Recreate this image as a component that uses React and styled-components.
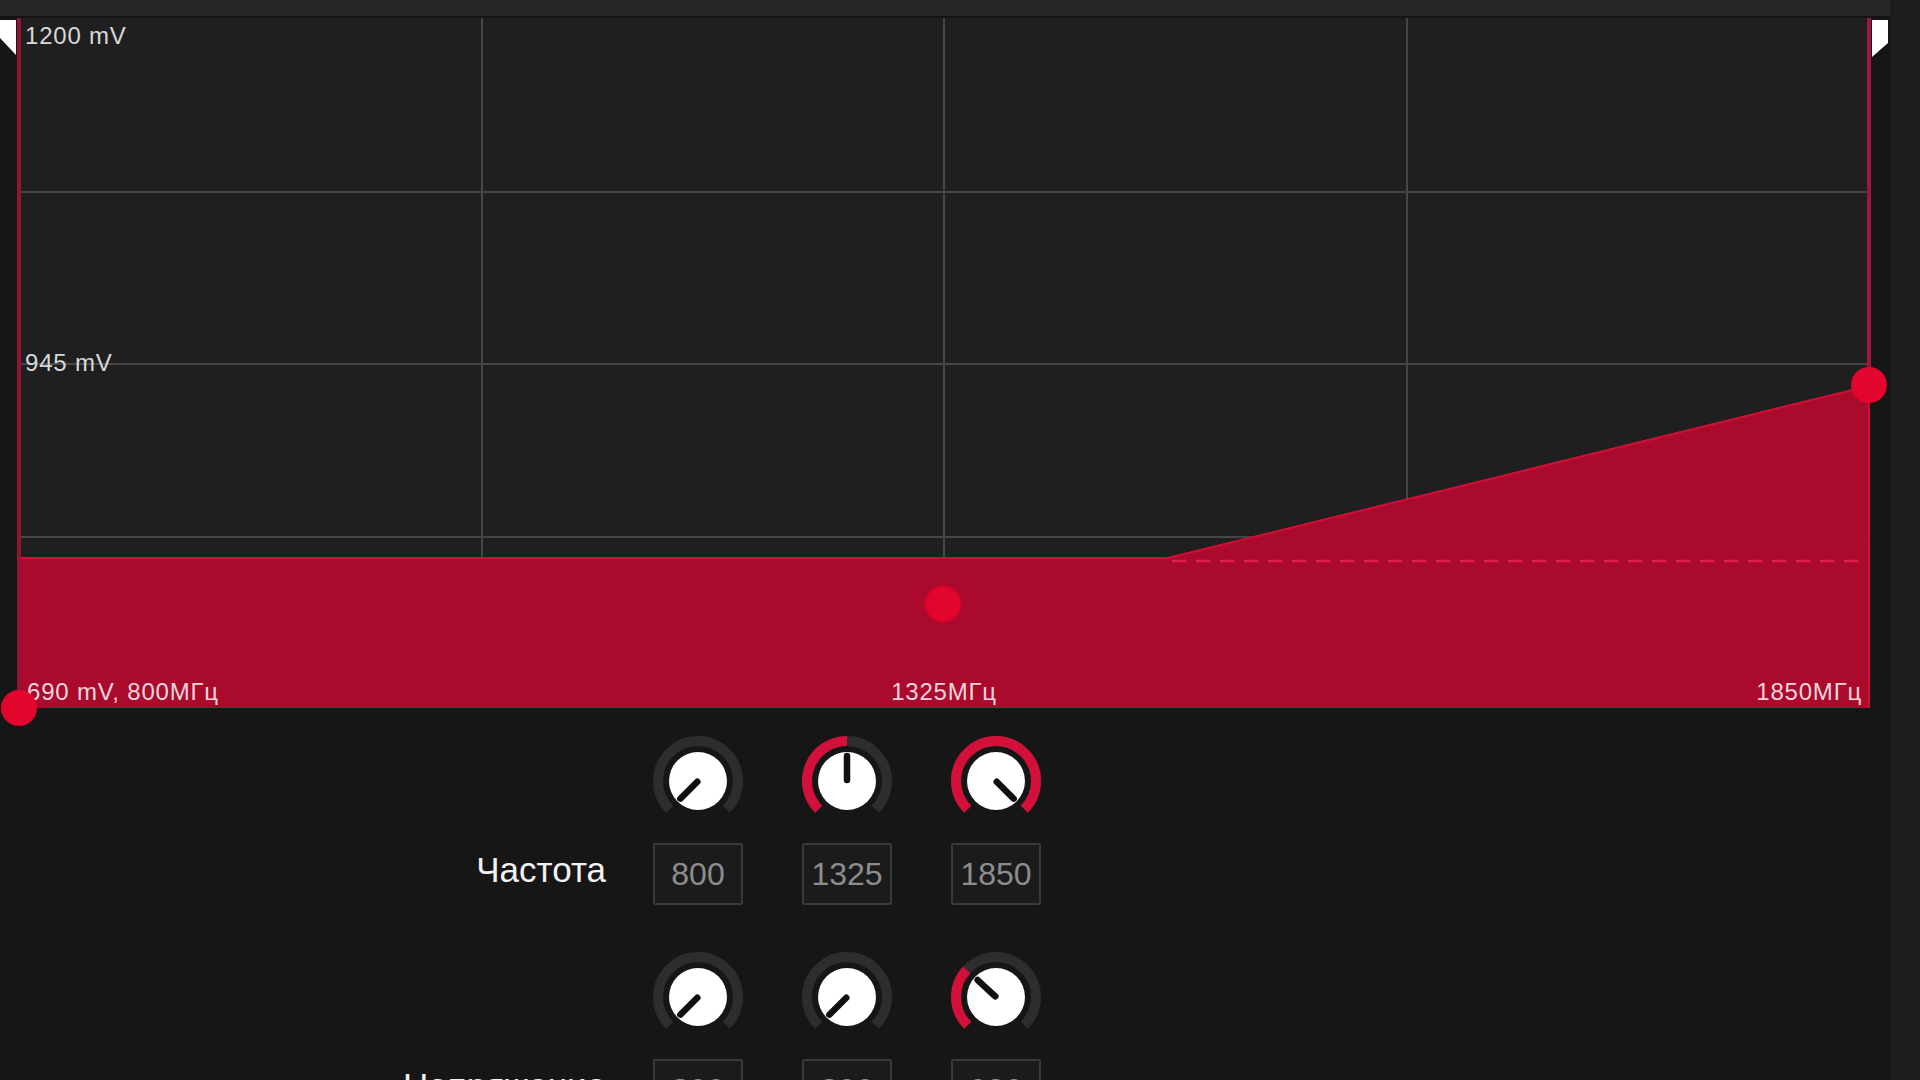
import React from 'react';
import styled, { createGlobalStyle } from 'styled-components';

const Global = createGlobalStyle`
  html, body { margin: 0; padding: 0; background: #161616; overflow: hidden; }
  body { font-family: "Liberation Sans", Arial, sans-serif; }
`;

const Page = styled.div`
  display: flex;
  width: 1920px;
  height: 1080px;
  overflow: hidden;
  background: #161616;
`;

const Main = styled.div`
  width: 1890px;
  display: flex;
  flex-direction: column;
`;

const Scrollbar = styled.div`
  flex: 1;
  background: #1d1d1d;
`;

const TopBar = styled.div`
  height: 16px;
  flex-shrink: 0;
  background: #262626;
  border-bottom: 2px solid #141414;
`;

const ChartWrap = styled.div`
  position: relative;
  height: 712px;
  flex-shrink: 0;
`;

const ChartSvg = styled.svg`
  display: block;
`;

const ChartLabel = styled.span`
  position: absolute;
  top: ${(p) => p.$top}px;
  ${(p) => (p.$right !== undefined ? `right: ${p.$right}px;` : `left: ${p.$left}px;`)}
  ${(p) => (p.$center ? 'transform: translateX(-50%);' : '')}
  font-size: 24px;
  line-height: 24px;
  letter-spacing: 0.8px;
  white-space: nowrap;
  color: ${(p) => (p.$onFill ? '#f4d5dc' : '#d8d8d8')};
  z-index: 1;
`;

const PointHandle = styled.span`
  position: absolute;
  left: ${(p) => p.$x}px;
  top: ${(p) => p.$y}px;
  width: 36px;
  height: 36px;
  margin: -18px 0 0 -18px;
  border-radius: 50%;
  background: #e2052e;
  filter: ${(p) => (p.$soft ? 'blur(1.2px)' : 'none')};
  z-index: 2;
`;

const Controls = styled.div`
  display: flex;
  flex-direction: column;
  gap: 47px;
  padding-top: 6px;
`;

const Group = styled.div`
  display: flex;
  flex-direction: column;
  gap: 17px;
`;

const KnobRow = styled.div`
  display: flex;
  gap: 59px;
  padding-left: 653px;
`;

const FieldRow = styled.div`
  display: flex;
  align-items: center;
`;

const FieldLabel = styled.div`
  width: 606px;
  margin-right: 47px;
  text-align: right;
  color: #f2f2f2;
  font-size: 35px;
  line-height: 40px;
  margin-top: -8px;
`;

const Fields = styled.div`
  display: flex;
  gap: 59px;
`;

const ValueBox = styled.div`
  width: 90px;
  height: 62px;
  box-sizing: border-box;
  border: 2px solid #3a3a3a;
  border-radius: 2px;
  background: #1b1b1b;
  color: #8d8d8d;
  font-size: 32px;
  display: flex;
  align-items: center;
  justify-content: center;
`;

const KnobSvg = styled.svg`
  display: block;
  width: 90px;
  height: 90px;
`;

const polar = (r, deg) => [
  45 + r * Math.cos((deg * Math.PI) / 180),
  45 - r * Math.sin((deg * Math.PI) / 180),
];

const arcPath = (r, a0, a1) => {
  const [x0, y0] = polar(r, a0);
  const [x1, y1] = polar(r, a1);
  const large = a0 - a1 > 180 ? 1 : 0;
  return `M${x0} ${y0} A${r} ${r} 0 ${large} 1 ${x1} ${y1}`;
};

function Knob({ value }) {
  const end = 225 - 270 * value;
  const [px0, py0] = polar(1, end);
  const [px1, py1] = polar(25, end);
  return (
    <KnobSvg viewBox="0 0 90 90">
      <path d={arcPath(40, 225, -45)} stroke="#2d2d2d" strokeWidth="10" fill="none" />
      {value > 0.001 && (
        <path d={arcPath(40, 225, end)} stroke="#d3103a" strokeWidth="10" fill="none" />
      )}
      <circle cx="45" cy="45" r="29" fill="#ffffff" />
      <line x1={px0} y1={py0} x2={px1} y2={py1} stroke="#101010" strokeWidth="6.5" strokeLinecap="round" />
    </KnobSvg>
  );
}

const groups = [
  {
    label: 'Частота',
    items: [
      { v: 0, text: '800' },
      { v: 0.5, text: '1325' },
      { v: 1, text: '1850' },
    ],
  },
  {
    label: 'Напряжение',
    items: [
      { v: 0, text: '800' },
      { v: 0, text: '800' },
      { v: 0.325, text: '930' },
    ],
  },
];

function Chart() {
  const vLines = [482, 944, 1407];
  const hLines = [192, 364, 537];
  return (
    <ChartWrap>
      <ChartSvg width="1890" height="712" viewBox="0 18 1890 712">
        <rect x="21" y="18" width="1847" height="690" fill="#1f1f1f" />
        {vLines.map((x) => (
          <line key={x} x1={x} y1="18" x2={x} y2="708" stroke="#464646" strokeWidth="2" />
        ))}
        {hLines.map((y) => (
          <line key={y} x1="21" y1={y} x2="1867" y2={y} stroke="#464646" strokeWidth="2" />
        ))}
        <polygon
          points="21,557 1168,557 1869,385 1869,708 21,708"
          fill="#b2092d"
          fillOpacity="0.95"
        />
        <polyline
          points="21,558 1168,558 1869,386"
          fill="none"
          stroke="#cc1037"
          strokeWidth="2"
        />
        <line x1="1869" y1="386" x2="1869" y2="708" stroke="#c81035" strokeWidth="2" />
        <line
          x1="1172"
          y1="561"
          x2="1866"
          y2="561"
          stroke="#dc2048"
          strokeWidth="2.5"
          strokeDasharray="14 10"
        />
        <line x1="19" y1="18" x2="19" y2="708" stroke="#901434" strokeWidth="4" />
        <line x1="1869" y1="18" x2="1869" y2="385" stroke="#a0163c" strokeWidth="4" />
        <polygon points="0,20 16,20 16,55 0,38" fill="#ffffff" />
        <polygon points="1872,20 1888,20 1888,43 1872,57" fill="#ffffff" />
      </ChartSvg>
      <ChartLabel $left={25} $top={6}>1200 mV</ChartLabel>
      <ChartLabel $left={25} $top={333}>945 mV</ChartLabel>
      <ChartLabel $left={27} $top={662} $onFill>690 mV, 800МГц</ChartLabel>
      <ChartLabel $left={944} $top={662} $center $onFill>1325МГц</ChartLabel>
      <ChartLabel $right={28} $top={662} $onFill>1850МГц</ChartLabel>
      <PointHandle $x={19} $y={690} />
      <PointHandle $x={943} $y={586} $soft />
      <PointHandle $x={1869} $y={367} />
    </ChartWrap>
  );
}

export default function App() {
  return (
    <Page>
      <Global />
      <Main>
        <TopBar />
        <Chart />
        <Controls>
          {groups.map((g) => (
            <Group key={g.label}>
              <KnobRow>
                {g.items.map((it, i) => (
                  <Knob key={i} value={it.v} />
                ))}
              </KnobRow>
              <FieldRow>
                <FieldLabel>{g.label}</FieldLabel>
                <Fields>
                  {g.items.map((it, i) => (
                    <ValueBox key={i}>{it.text}</ValueBox>
                  ))}
                </Fields>
              </FieldRow>
            </Group>
          ))}
        </Controls>
      </Main>
      <Scrollbar />
    </Page>
  );
}
